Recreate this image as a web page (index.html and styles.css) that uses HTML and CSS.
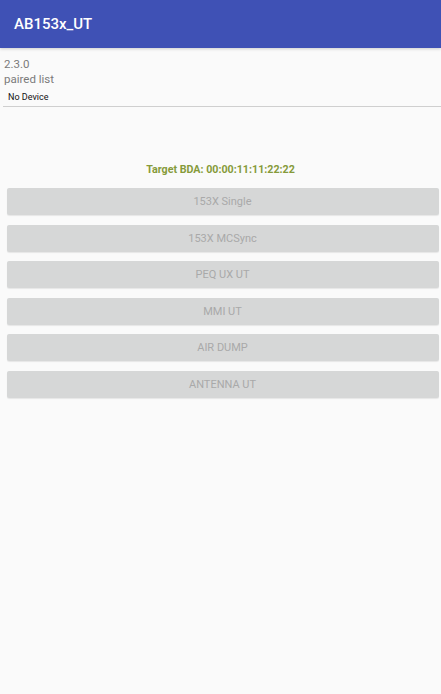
FILE: index.html
```html
<!DOCTYPE html>
<html>
<head>
<meta charset="utf-8">
<title>AB153x_UT</title>
<link rel="stylesheet" href="styles.css">
</head>
<body>
<div class="app">
  <header class="toolbar"><span class="title">AB153x_UT</span></header>
  <main class="content">
    <div class="info">
      <div class="version">2.3.0</div>
      <div class="label">paired list</div>
      <div class="device">No Device</div>
    </div>
    <div class="divider"></div>
    <div class="bda">Target BDA: 00:00:11:11:22:22</div>
    <div class="buttons">
      <div class="btn">153X Single</div>
      <div class="btn">153X MCSync</div>
      <div class="btn">PEQ UX UT</div>
      <div class="btn">MMI UT</div>
      <div class="btn">AIR DUMP</div>
      <div class="btn">ANTENNA UT</div>
    </div>
  </main>
</div>
</body>
</html>
```
FILE: styles.css
```css
html, body {
  margin: 0;
  padding: 0;
}
body {
  background: #fafafa;
  font-family: Roboto, "Noto Sans", "Liberation Sans", sans-serif;
  width: 441px;
  height: 694px;
  overflow: hidden;
}
.app {
  display: flex;
  flex-direction: column;
}
.toolbar {
  height: 48px;
  background: #3f51b5;
  display: flex;
  align-items: center;
  padding-left: 14px;
  box-shadow: 0 1px 3px rgba(0,0,0,0.18);
  position: relative;
  z-index: 1;
}
.title {
  color: #ffffff;
  font-size: 15px;
  font-weight: 500;
}
.content {
  display: flex;
  flex-direction: column;
}
.info {
  padding: 9px 0 0 4px;
}
.version, .label {
  font-size: 11.5px;
  line-height: 15px;
  color: #7a7a7a;
}
.device {
  font-size: 9px;
  line-height: 14px;
  color: #111111;
  margin: 3px 0 0 4px;
}
.divider {
  height: 1px;
  background: #cfcfcf;
  margin: 2px 0 0 3px;
}
.bda {
  margin-top: 56px;
  text-align: center;
  font-size: 10.7px;
  line-height: 13px;
  font-weight: 700;
  color: #869a3a;
}
.buttons {
  display: flex;
  flex-direction: column;
  gap: 9.5px;
  padding: 0 2.5px 0 6.5px;
  margin-top: 12px;
}
.btn {
  height: 27px;
  background: #d6d7d7;
  border-radius: 2px;
  box-shadow: 0 1px 1px rgba(0,0,0,0.08);
  display: flex;
  align-items: center;
  justify-content: center;
  font-size: 11px;
  color: #a9a9a9;
}
```
